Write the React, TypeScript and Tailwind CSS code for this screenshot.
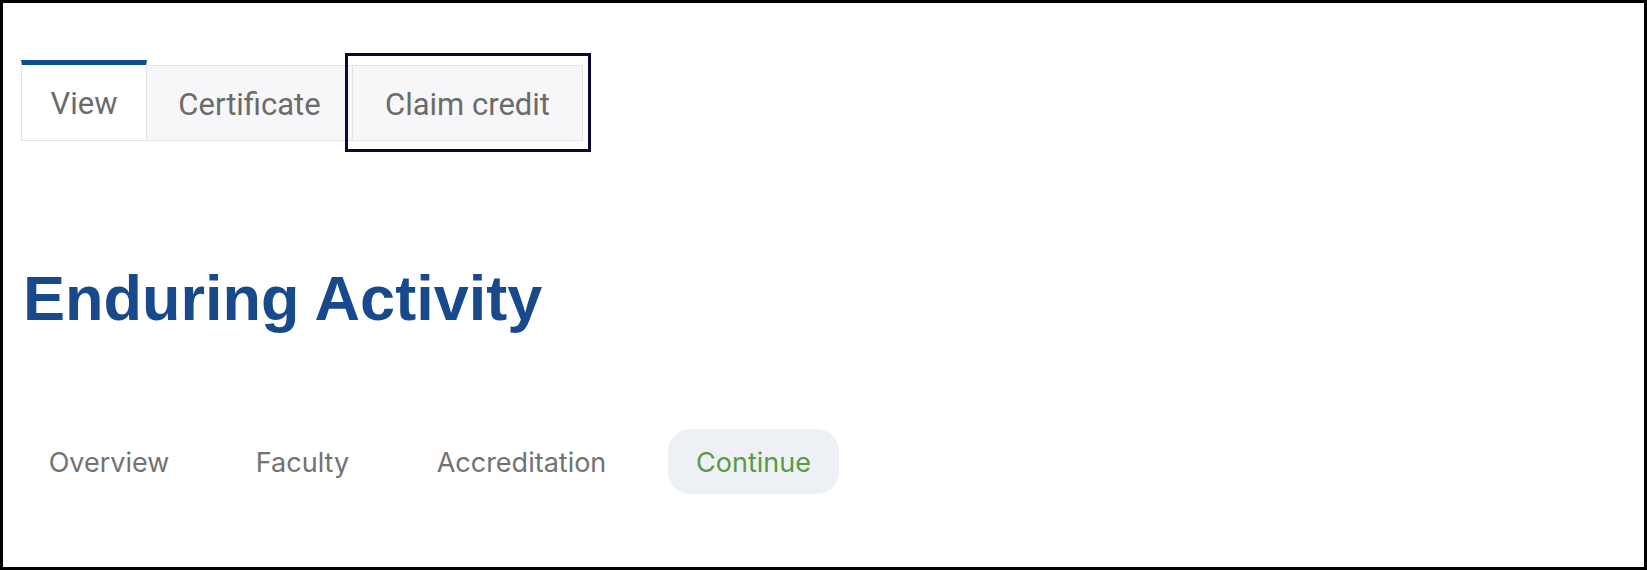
import React from 'react'

const tabs = [
  { label: 'View', width: 'w-[126px]', active: true },
  { label: 'Certificate', width: 'w-[206px]', active: false },
  { label: 'Claim credit', width: 'w-[230px]', active: false, focused: true },
]

const sections = [
  { label: 'Overview', cls: 'w-[172px]' },
  { label: 'Faculty', cls: 'w-[143px] ml-[36px]' },
  { label: 'Accreditation', cls: 'w-[227px] ml-[34px]' },
  { label: 'Continue', cls: 'w-[171px] ml-[33px]', current: true },
]

function Tabs() {
  return (
    <div className="flex items-end" style={{ fontFamily: 'Roboto, "Liberation Sans", sans-serif' }}>
      {tabs.map((t) =>
        t.active ? (
          <div
            key={t.label}
            className={`${t.width} h-[81px] pt-[4px] flex items-center justify-center bg-white border-t-[5px] border-t-[#0b4f93] border-x border-b border-x-[#e3e3e3] border-b-[#e3e3e3] text-[31px] text-[#6b6b6b]`}
          >
            {t.label}
          </div>
        ) : (
          <div key={t.label} className="relative">
            <div
              className={`${t.width} h-[76px] pt-[4px] flex items-center justify-center bg-[#f7f7f9] border-y border-r border-[#e3e3e3] text-[31px] text-[#6b6b6b]`}
            >
              {t.label}
            </div>
            {t.focused && (
              <span className="absolute -left-[8px] -right-[8px] -top-[12px] -bottom-[11px] border-[3px] border-[#0a0a3a] pointer-events-none" />
            )}
          </div>
        )
      )}
    </div>
  )
}

function SectionNav() {
  return (
    <nav className="flex ml-[2px]" style={{ fontFamily: 'Inter, "Liberation Sans", sans-serif' }}>
      {sections.map((s) => (
        <div
          key={s.label}
          className={`${s.cls} h-[65px] pt-[4px] flex items-center justify-center rounded-[22px] text-[27px] ${
            s.current ? 'bg-[#edf1f5] text-[#5a9a44]' : 'text-[#727272]'
          }`}
        >
          {s.label}
        </div>
      ))}
    </nav>
  )
}

export default function App() {
  return (
    <div className="w-[1647px] h-[570px] border-[3px] border-black bg-white pl-[18px] pt-[57px]">
      <Tabs />
      <h1
        className="mt-[126px] ml-[2px] text-[63px] leading-none font-bold text-[#17498c]"
        style={{ fontFamily: '"Liberation Sans", Arial, sans-serif' }}
      >
        Enduring Activity
      </h1>
      <div className="mt-[99px]">
        <SectionNav />
      </div>
    </div>
  )
}
